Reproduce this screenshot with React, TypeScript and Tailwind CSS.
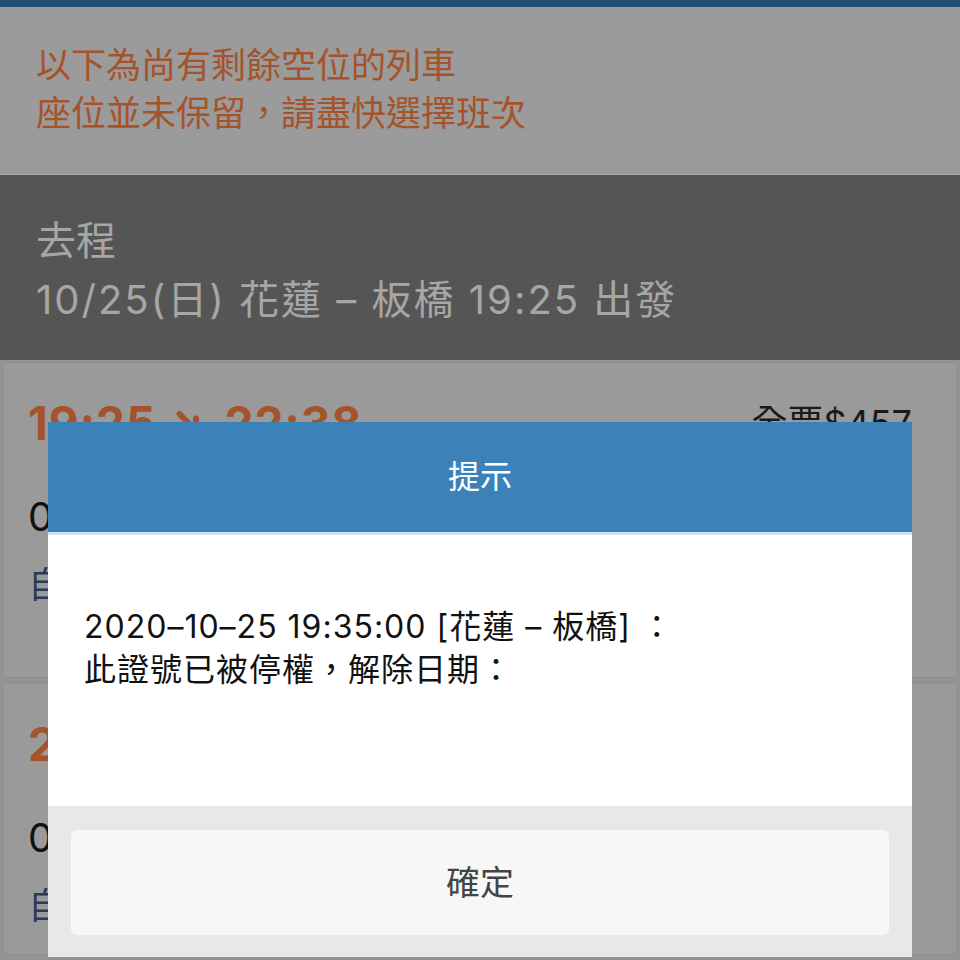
import type { ReactNode } from 'react'

const font = "font-['Inter','Noto_Sans_CJK_TC',sans-serif]"

interface Train {
  depart: string
  arrive: string
  price: string
  line2: string
  line3: string
}

const trains: Train[] = [
  { depart: '19:25', arrive: '22:38', price: '全票$457', line2: '0 時 13 分', line3: '自強號 438 車次' },
  { depart: '20:05', arrive: '23:02', price: '全票$457', line2: '0 時 57 分', line3: '自強號 442 車次' },
]

function Arrow() {
  return (
    <svg viewBox="0 0 24 24" className="mx-[16px] h-[36px] w-[36px]" fill="none">
      <path d="M5 6 L16 17 M16 17 L16 9 M16 17 L8 17" stroke="#a5532a" strokeWidth="4" strokeLinecap="round" />
    </svg>
  )
}

function TrainCard({ t, className }: { t: Train; className?: string }) {
  return (
    <div className={`mx-[3px] border border-[#8f8f8f] bg-[#9a9a9a] px-[24px] ${className ?? ''}`}>
      <div className="flex h-[120px] items-center justify-between">
        <div className="flex items-center text-[46px] font-bold tracking-[1px] text-[#a5532a]">
          <span>{t.depart}</span>
          <Arrow />
          <span>{t.arrive}</span>
        </div>
        <span className="mr-[20px] text-[36px] text-[#1a1a1a]">{t.price}</span>
      </div>
      <p className="h-[68px] text-[40px] leading-[68px] text-[#111]">{t.line2}</p>
      <p className="h-[68px] text-[36px] leading-[68px] text-[#2c3a55]">{t.line3}</p>
    </div>
  )
}

function Modal({ title, children, ok }: { title: string; children: ReactNode; ok: string }) {
  return (
    <div className="absolute left-[48px] top-[422px] flex w-[864px] flex-col">
      <div className="flex h-[113px] items-center justify-center border-b-[3px] border-[#cfe2f0] bg-[#3c82b8] text-[32px] text-white">
        {title}
      </div>
      <div className="h-[271px] bg-white px-[36px] pt-[70px] text-[32px] leading-[43px] tracking-[1px] text-[#111]">
        {children}
      </div>
      <div className="h-[151px] bg-[#e8e8e8] px-[23px] pt-[24px]">
        <button
          type="button"
          className="flex h-[105px] w-full items-center justify-center rounded-[6px] bg-[#f7f7f7] text-[34px] text-[#444]"
        >
          {ok}
        </button>
      </div>
    </div>
  )
}

export default function App() {
  return (
    <div className={`relative h-[960px] w-[960px] overflow-hidden bg-[#939393] ${font}`}>
      <div className="h-[7px] bg-[#234f71]" />
      <div className="h-[167px] bg-[#9b9b9b] px-[36px] pt-[34px] text-[35px] leading-[48px] text-[#a5532a]">
        <p>以下為尚有剩餘空位的列車</p>
        <p>座位並未保留，請盡快選擇班次</p>
      </div>
      <div className="h-[1px] bg-[#a9a9a9]" />
      <div className="h-[185px] bg-[#555555] px-[36px] pt-[36px] text-[40px] leading-[59px] text-[#a6a6a6]">
        <p>去程</p>
        <p className="tracking-[2px]">10/25(日) 花蓮 – 板橋 19:25 出發</p>
      </div>
      <TrainCard t={trains[0]} className="mt-[2px] h-[316px]" />
      <TrainCard t={trains[1]} className="mt-[5px] h-[272px]" />

      <Modal title="提示" ok="確定">
        <p>2020–10–25 19:35:00 [花蓮 – 板橋] ：</p>
        <p>此證號已被停權，解除日期：</p>
      </Modal>
    </div>
  )
}
